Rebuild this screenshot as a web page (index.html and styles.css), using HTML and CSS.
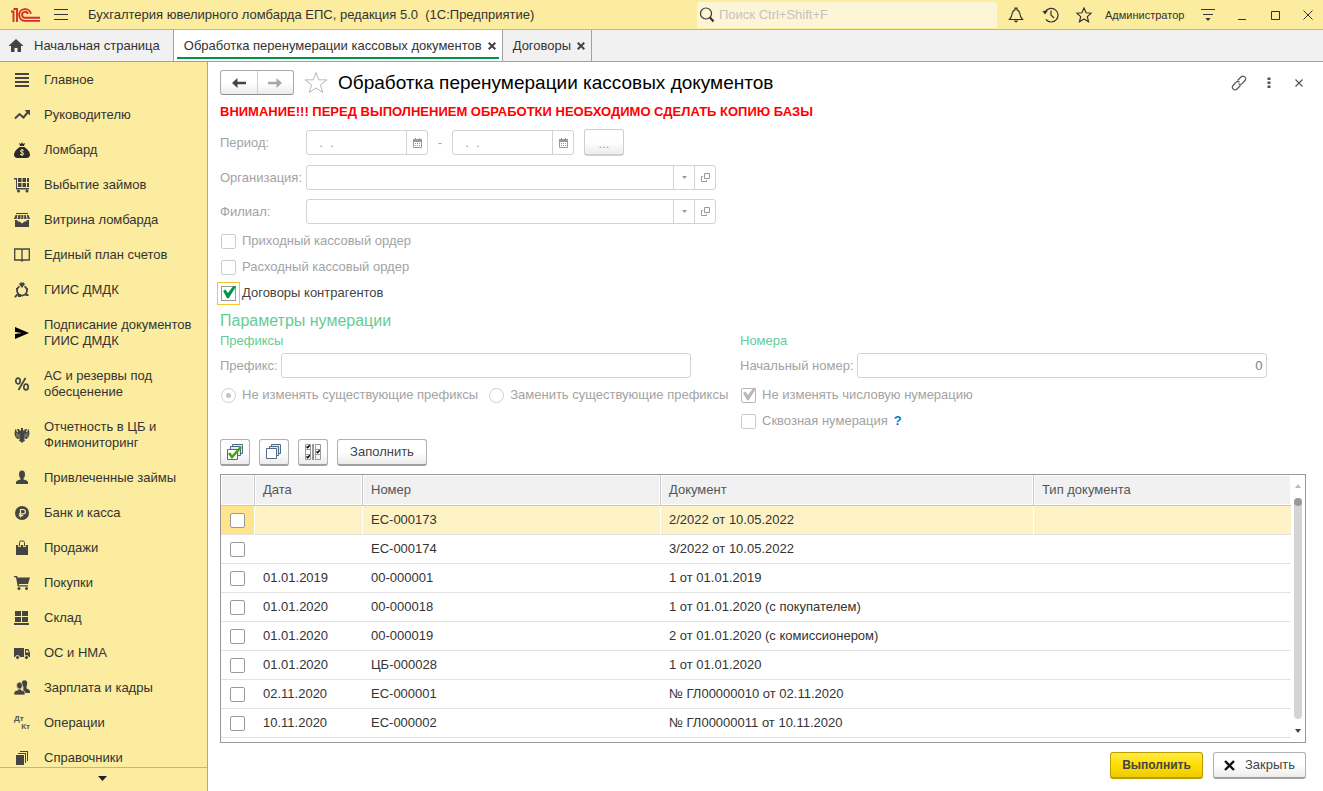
FILE: index.html
```html
<!DOCTYPE html>
<html lang="ru">
<head>
<meta charset="utf-8">
<title>Обработка перенумерации кассовых документов</title>
<link rel="stylesheet" href="styles.css">
</head>
<body>
<header class="topbar">
  <svg class="logo" width="30" height="16" viewBox="0 0 30 16" fill="none" stroke="#dc2a2a" stroke-width="1.900"><path d="M0 4.500h2.500V15M2.500 2h3.500V15"/><path d="M19.900 6.800A5.900 5.900 0 1 0 14 13.900H29"/><path d="M17 7A3 3 0 1 0 14 10.800H29"/></svg>
  <button class="icon-btn burger" aria-label="Меню"><svg width="14" height="12" viewBox="0 0 14 12" stroke="#333" fill="none"><path d="M0 .5h14M0 5.500h14M0 10.500h14"/></svg></button>
  <span class="app-title">Бухгалтерия ювелирного ломбарда ЕПС, редакция 5.0&nbsp; (1С:Предприятие)</span>
  <label class="search">
    <svg width="16" height="16" viewBox="0 0 16 16" fill="none" stroke="#333"><circle cx="7" cy="6.500" r="5.500" stroke-width="1.200"/><path d="M11 10.500l3.500 4" stroke-width="2.200"/></svg>
    <input type="search" placeholder="Поиск Ctrl+Shift+F" aria-label="Поиск">
  </label>
  <button class="icon-btn" aria-label="Уведомления"><svg width="16" height="16" viewBox="0 0 16 16" fill="none" stroke="#333" stroke-width="1.200"><path d="M1.500 12.500c2-2 2.500-4 3-7C4.900 3.500 6.500 3 7 2.800V1.200h2v1.600c.5.200 2.100.7 2.500 2.700.5 3 1 5 3 7z"/><path d="M5.500 13.500h5L8 15.800z" fill="#333" stroke="none"/></svg></button>
  <button class="icon-btn" aria-label="История"><svg width="17" height="16" viewBox="0 0 17 16" fill="none" stroke="#333" stroke-width="1.200"><path d="M3 5.500A6.800 6.800 0 1 1 4 12.500"/><path d="M9 3.500V8l3 3"/><path d="M.5 4l5.500-.5L3 7.500z" fill="#333" stroke="none"/></svg></button>
  <button class="icon-btn" aria-label="Избранное"><svg width="16" height="16" viewBox="0 0 16 16" fill="none" stroke="#333" stroke-width="1.200"><path d="M8 1l2.100 4.800 5.100.4-3.900 3.400 1.200 5.100L8 12l-4.500 2.700 1.200-5.100L.8 6.200l5.100-.4z"/></svg></button>
  <span class="user">Администратор</span>
  <button class="icon-btn" aria-label="Сервис"><svg width="14" height="14" viewBox="0 0 14 14" stroke="#333" fill="none"><path d="M0 1.500h14M2 6.500h10"/><path d="M4.500 10h5L7 13z" fill="#333" stroke="none"/></svg></button>
  <button class="icon-btn" aria-label="Свернуть"><svg width="10" height="12" viewBox="0 0 10 12" stroke="#333"><path d="M1 10.500h8"/></svg></button>
  <button class="icon-btn" aria-label="Развернуть"><svg width="10" height="10" viewBox="0 0 10 10" fill="none" stroke="#333"><path d="M.5 1.500h8v8h-8z"/></svg></button>
  <button class="icon-btn" aria-label="Закрыть программу"><svg width="10" height="10" viewBox="0 0 10 10" stroke="#333"><path d="M.5.500l9 9M9.500.500l-9 9"/></svg></button>
</header>

<nav class="tabs">
  <a class="tab home" href="#"><svg width="16" height="14" viewBox="0 0 16 14" fill="#444"><path d="M8 0l7.500 7H13v6H9.500V9h-3v4H3V7H.5z"/></svg>Начальная страница</a>
  <div class="tab active"><a href="#">Обработка перенумерации кассовых документов</a><button class="tab-close" aria-label="Закрыть вкладку"><svg width="8" height="8" viewBox="0 0 8 8" stroke="#444" stroke-width="2"><path d="M.7.7l6.600 6.600M7.300.7L.7 7.300"/></svg></button></div>
  <div class="tab"><a href="#">Договоры</a><button class="tab-close" aria-label="Закрыть вкладку"><svg width="8" height="8" viewBox="0 0 8 8" stroke="#444" stroke-width="2"><path d="M.7.7l6.600 6.600M7.300.7L.7 7.300"/></svg></button></div>
</nav>

<div class="body">
<aside class="sidebar">
  <div class="menu">
    <a href="#"><svg viewBox="0 0 16 16"><path d="M1 1h14v2H1zM1 5h14v2H1zM1 9h14v2H1zM1 13h14v2H1z"/></svg>Главное</a>
    <a href="#"><svg viewBox="0 0 16 16"><path d="M1 11.500l4.500-4.500 4 3.500L14 5" fill="none" stroke="#444" stroke-width="2"/><path d="M10.500 3H16v5.500z"/></svg>Руководителю</a>
    <a href="#"><svg viewBox="0 0 16 16"><g fill="#2b2b2b"><path d="M5 1l2 1 1-2 1 2 2-1-1 3H6z"/><path d="M5.500 5h5c2 1.500 5.500 4.500 5.500 8 0 2-2 3-3 3H3c-1 0-3-1-3-3 0-3.500 3.500-6.500 5.500-8z"/></g><path d="M9.800 8.500C8.500 7.500 6.200 7.800 6.500 9.300c.3 1.400 3.200.8 3.200 2.400 0 1.500-2.500 1.600-3.600.6M8 7v7" fill="none" stroke="#fbec9f"/></svg>Ломбард</a>
    <a href="#"><svg viewBox="0 0 16 16"><path d="M0 1h3v10h12v1.500H2V2.500H0zM4 1h3.500v4H4zM8.500 1H12v4H8.500zM13 1h2v4h-2zM4 6h3.500v4H4zM8.500 6H12v4H8.500zM13 6h2v4h-2z"/><circle cx="4.500" cy="14" r="1.500"/><circle cx="13" cy="14" r="1.500"/></svg>Выбытие займов</a>
    <a href="#"><svg viewBox="0 0 16 16"><path d="M2 1h12v1H2zM1.500 3h2L2.500 7H0zM4.500 3h2.200l-.4 4H3.500zM7.500 3h1.800v4H7.200zM10.200 3h1.500l1 4h-2.500zM12.700 3h1.800L16 7h-2.300zM1 8h2l1 1.500h1.500L8 11.500l2.500-2H12L13 8h2v7H1z"/></svg>Витрина ломбарда</a>
    <a href="#"><svg viewBox="0 0 16 16"><path d="M.7 2h6.500L8 3l.8-1h6.500v11H9l-1 1-1-1H.7zM8 3v11" fill="none" stroke="#444" stroke-width="1.300"/></svg>Единый план счетов</a>
    <a href="#"><svg viewBox="0 0 16 16"><path d="M5.500 4.200a5 5 0 1 0 5 0M4 12L.8 15.200" fill="none" stroke="#444" stroke-width="1.800"/><path d="M5 2l1.500-1.500h3L11 2 8 6z"/><path d="M2 6h2v2H2zM12 6h2v2h-2zM11.500 12h3v2h-3zM4 12h3v3H4z"/></svg>ГИИС ДМДК</a>
    <a href="#"><svg viewBox="0 0 16 16"><path d="M1 2l14 6-14 6V9l7-1-7-1z" fill="#000"/></svg>Подписание документов ГИИС ДМДК</a>
    <a href="#"><svg viewBox="0 0 16 16"><g stroke="#444" fill="none" stroke-width="1.700"><ellipse cx="4" cy="5" rx="2.200" ry="2.800"/><ellipse cx="12" cy="11" rx="2.200" ry="2.800"/><path d="M11.500 2l-7 12"/></g></svg>АС и резервы под обесценение</a>
    <a href="#"><svg viewBox="0 0 16 16"><path d="M7 1h2v2l1 1 1-2h2l-1 2.500 1 1L14 2l1 1 .5 4-1 3-2 2-2.500-.5 1 2.500-1.500.5L8 16l-1.500-1.500L5 14l1-2.500-2.500.5-2-2-1-3L1 3l1-1 1 3.500 1-1L3 2h2l1 2 1-1z"/><path d="M3 6v4M5 7v4M11 7v4M13 6v4" stroke="#fbec9f" stroke-width=".5"/></svg>Отчетность в ЦБ и Финмониторинг</a>
    <a href="#"><svg viewBox="0 0 16 16"><ellipse cx="8" cy="4.500" rx="3" ry="4"/><path d="M6.500 8h3v1.500c3 .5 4.500 1.500 4.500 3V14H2v-1.500c0-1.500 1.500-2.500 4.500-3z"/></svg>Привлеченные займы</a>
    <a href="#"><svg viewBox="0 0 16 16"><circle cx="8" cy="8" r="7"/><path d="M6.500 12.500V4.500h2.700a2.200 2.200 0 0 1 0 4.400H4.800M4.800 10.700h4.400" fill="none" stroke="#fbec9f" stroke-width="1.200"/></svg>Банк и касса</a>
    <a href="#"><svg viewBox="0 0 16 16"><path d="M2 5h12v10H2z"/><path d="M5.500 7V2.500q0-1.500 1.500-1.500h2q1.500 0 1.500 1.500V7" fill="none" stroke="#fbec9f" stroke-width="2.600"/><path d="M5.500 6V2.500q0-1.500 1.500-1.500h2q1.500 0 1.500 1.500V6" fill="none" stroke="#444"/></svg>Продажи</a>
    <a href="#"><svg viewBox="0 0 16 16"><path d="M0 1h3l.6 1.500H16L14 9H4.800l.2 1.200h9v1.300H3.700L2 2.300H0z"/><circle cx="5" cy="13.500" r="1.500"/><circle cx="12.500" cy="13.500" r="1.500"/></svg>Покупки</a>
    <a href="#"><svg viewBox="0 0 16 16"><path d="M1 1h6v5H1zM8 1h6v5H8zM1 7h6v5H1zM8 7h6v5H8zM0 13h15v2H0z"/></svg>Склад</a>
    <a href="#"><svg viewBox="0 0 16 16"><path d="M0 3h10v9H0zM11 4h3.500L16 8v4h-5z"/><path d="M12 5.500h2l.8 2H12z" fill="#fbec9f"/><g stroke="#fbec9f"><circle cx="3.500" cy="12.500" r="2"/><circle cx="12.500" cy="12.500" r="2"/></g></svg>ОС и НМА</a>
    <a href="#"><svg viewBox="0 0 16 16"><ellipse cx="10.500" cy="3.500" rx="2.700" ry="3.300"/><path d="M9.500 6h3v2.500c2 .5 3.500 1.500 3.500 3V13H9z"/><g stroke="#fbec9f" stroke-width=".7"><path d="M4 8.500h3V10c3 .5 4 1.500 4 3v2H0v-2c0-1.500 1-2.500 4-3z"/><ellipse cx="5.500" cy="5.500" rx="2.900" ry="3.500"/></g></svg>Зарплата и кадры</a>
    <a href="#"><span class="dtkt" aria-hidden="true"><b>Дт</b><b>Кт</b></span>Операции</a>
    <a href="#"><svg viewBox="0 0 16 16"><path d="M2 5h8v10H2zM4 3h8v10h-1V4H4zM6 1h8v10h-1V2H6z"/></svg>Справочники</a>
  </div>
  <button class="more" aria-label="Ещё"><svg width="9" height="5" viewBox="0 0 9 5"><path d="M0 0h9L4.500 5z" fill="#222"/></svg></button>
</aside>

<main class="page">
  <div class="page-head">
    <div class="history">
      <button aria-label="Назад"><svg width="14" height="10" viewBox="0 0 14 10" fill="#444"><path d="M0 5l5.500-5v3.700H14v2.600H5.500V10z"/></svg></button>
      <button aria-label="Вперед"><svg width="14" height="10" viewBox="0 0 14 10" fill="#a8a8a8"><path d="M14 5L8.500 0v3.700H0v2.600h8.500V10z"/></svg></button>
    </div>
    <button class="icon-btn fav" aria-label="В избранное"><svg width="24" height="23" viewBox="0 0 24 23" fill="none" stroke="#b4b9c0"><path d="M12 1.500l2.700 7.300 8.300.1-6.600 4.900 2.500 7.700L12 17l-6.900 4.500 2.500-7.700L1 8.900l8.300-.1z"/></svg></button>
    <h1>Обработка перенумерации кассовых документов</h1>
    <button class="icon-btn tool" aria-label="Получить ссылку"><svg width="16" height="16" viewBox="0 0 16 16" fill="none" stroke="#555" stroke-width="1.200"><path d="M6.500 5.500L10 2c2.500-2.500 6 1 4 3.500L11 8.700c-1 1-2.500 1-3.500 0M9.500 10.500L6 14c-2.500 2.500-6-1-4-3.500L5 7.300c1-1 2.500-1 3.500 0"/></svg></button>
    <button class="icon-btn tool" aria-label="Ещё действия"><svg width="4" height="12" viewBox="0 0 4 12" fill="#555"><path d="M.5.500h3v2.500h-3zM.5 4.500h3V7h-3zM.5 8.500h3V11h-3z"/></svg></button>
    <button class="icon-btn tool" aria-label="Закрыть форму"><svg width="8" height="8" viewBox="0 0 8 8" stroke="#555" stroke-width="1.200"><path d="M.5.500l7 7M7.500.500l-7 7"/></svg></button>
  </div>

  <p class="warning">ВНИМАНИЕ!!! ПЕРЕД ВЫПОЛНЕНИЕМ ОБРАБОТКИ НЕОБХОДИМО СДЕЛАТЬ КОПИЮ БАЗЫ</p>

  <div class="row period">
    <label class="lbl" for="from">Период:</label>
    <div class="field date"><input id="from" value="  .  .    " disabled><button disabled aria-label="Выбрать дату"><svg width="9" height="10" viewBox="0 0 9 10"><path d="M.5 1.500h8v8h-8z" fill="none" stroke="#999"/><path d="M0 1h9v3H0zM2 0h1v1H2zM6 0h1v1H6zM2 5h1v1H2zM4 5h1v1H4zM6 5h1v1H6zM2 7h1v1H2zM4 7h1v1H4zM6 7h1v1H6z" fill="#999"/></svg></button></div>
    <span class="dash">-</span>
    <div class="field date"><input aria-label="Конец периода" value="  .  .    " disabled><button disabled aria-label="Выбрать дату"><svg width="9" height="10" viewBox="0 0 9 10"><path d="M.5 1.500h8v8h-8z" fill="none" stroke="#999"/><path d="M0 1h9v3H0zM2 0h1v1H2zM6 0h1v1H6zM2 5h1v1H2zM4 5h1v1H4zM6 5h1v1H6zM2 7h1v1H2zM4 7h1v1H4zM6 7h1v1H6z" fill="#999"/></svg></button></div>
    <button class="btn dots" disabled>...</button>
  </div>
  <div class="row">
    <label class="lbl" for="org">Организация:</label>
    <div class="field wide"><input id="org" disabled><button disabled aria-label="Список"><svg width="5" height="3" viewBox="0 0 5 3"><path d="M0 0h5L2.500 3z" fill="#999"/></svg></button><button disabled aria-label="Открыть"><svg width="9" height="9" viewBox="0 0 9 9" fill="none" stroke="#999"><path d="M3.500.500h5v5h-5zM2 3.500H.5v5h5V7"/></svg></button></div>
  </div>
  <div class="row">
    <label class="lbl" for="branch">Филиал:</label>
    <div class="field wide"><input id="branch" disabled><button disabled aria-label="Список"><svg width="5" height="3" viewBox="0 0 5 3"><path d="M0 0h5L2.500 3z" fill="#999"/></svg></button><button disabled aria-label="Открыть"><svg width="9" height="9" viewBox="0 0 9 9" fill="none" stroke="#999"><path d="M3.500.500h5v5h-5zM2 3.500H.5v5h5V7"/></svg></button></div>
  </div>

  <div class="checks">
    <label class="opt off"><input type="checkbox" disabled>Приходный кассовый ордер</label>
    <label class="opt off"><input type="checkbox" disabled>Расходный кассовый ордер</label>
    <label class="opt"><input class="focused" type="checkbox" checked>Договоры контрагентов</label>
  </div>

  <h2>Параметры нумерации</h2>
  <div class="params">
    <section>
      <h3>Префиксы</h3>
      <div class="row tight"><label for="prefix">Префикс:</label><div class="field wide"><input id="prefix" disabled></div></div>
      <div class="radios">
        <label class="opt off"><input type="radio" name="mode" checked disabled>Не изменять существующие префиксы</label>
        <label class="opt off"><input type="radio" name="mode" disabled>Заменить существующие префиксы</label>
      </div>
    </section>
    <section>
      <h3>Номера</h3>
      <div class="row tight"><label for="start">Начальный номер:</label><div class="field wide"><input class="num" id="start" value="0" disabled></div></div>
      <label class="opt off"><input type="checkbox" checked disabled>Не изменять числовую нумерацию</label>
      <div class="with-help"><label class="opt off"><input type="checkbox" disabled>Сквозная нумерация</label><a class="help" href="#">?</a></div>
    </section>
  </div>

  <div class="toolbar">
    <button class="btn sq" aria-label="Установить флажки"><svg width="16" height="16" viewBox="0 0 16 16" stroke="#4e6a86"><path d="M5.500.500h10v9h-10z" fill="#dfeaf2"/><path d="M3.500 2.500h10v9h-10z" fill="#dfeaf2"/><path d="M.5 5.500h10v10H.5z" fill="#fff"/><path d="M2 9l3 4L14 3" fill="none" stroke="#3aa614" stroke-width="2.600"/></svg></button>
    <button class="btn sq" aria-label="Снять флажки"><svg width="16" height="16" viewBox="0 0 16 16" stroke="#4e6a86"><path d="M5.500.500h9v9h-9z" fill="#dfeaf2"/><path d="M3.500 2.500h9v9h-9z" fill="#dfeaf2"/><path d="M.5 4.500h10v10H.5z" fill="#fff"/></svg></button>
    <button class="btn sq" aria-label="Инвертировать флажки"><svg width="16" height="16" viewBox="0 0 16 16" fill="none" stroke="#999"><path d="M.5.500h5v15h-5zM.5 5.500h5M.5 10.500h5M10.500.500h5v15h-5zM10.500 5.500h5M10.500 10.500h5"/><path d="M8 0v16" stroke="#333"/><path d="M1.500 2.500l1.200 1.200 2-2.500M1.500 12.500l1.200 1.200 2-2.500M11.500 7.500l1.200 1.200 2-2.500" stroke="#000" stroke-width="1.400"/></svg></button>
    <button class="btn fill">Заполнить</button>
  </div>

  <div class="grid">
    <table>
      <colgroup><col class="c-check"><col class="c-date"><col class="c-num"><col class="c-doc"><col></colgroup>
      <thead><tr><th></th><th>Дата</th><th>Номер</th><th>Документ</th><th>Тип документа</th></tr></thead>
      <tbody>
        <tr class="sel"><td><input type="checkbox" aria-label="Строка 1"></td><td></td><td>ЕС-000173</td><td>2/2022 от 10.05.2022</td><td></td></tr>
        <tr><td><input type="checkbox" aria-label="Строка 2"></td><td></td><td>ЕС-000174</td><td>3/2022 от 10.05.2022</td><td></td></tr>
        <tr><td><input type="checkbox" aria-label="Строка 3"></td><td>01.01.2019</td><td>00-000001</td><td>1 от 01.01.2019</td><td></td></tr>
        <tr><td><input type="checkbox" aria-label="Строка 4"></td><td>01.01.2020</td><td>00-000018</td><td>1 от 01.01.2020 (с покупателем)</td><td></td></tr>
        <tr><td><input type="checkbox" aria-label="Строка 5"></td><td>01.01.2020</td><td>00-000019</td><td>2 от 01.01.2020 (с комиссионером)</td><td></td></tr>
        <tr><td><input type="checkbox" aria-label="Строка 6"></td><td>01.01.2020</td><td>ЦБ-000028</td><td>1 от 01.01.2020</td><td></td></tr>
        <tr><td><input type="checkbox" aria-label="Строка 7"></td><td>02.11.2020</td><td>ЕС-000001</td><td>№ ГЛ00000010 от 02.11.2020</td><td></td></tr>
        <tr><td><input type="checkbox" aria-label="Строка 8"></td><td>10.11.2020</td><td>ЕС-000002</td><td>№ ГЛ00000011 от 10.11.2020</td><td></td></tr>
      </tbody>
    </table>
    <div class="scroll" aria-hidden="true">
      <svg width="6" height="4" viewBox="0 0 6 4"><path d="M0 4h6L3 0z" fill="#bbb"/></svg>
      <div class="track"><div class="thumb"></div></div>
      <svg width="6" height="4" viewBox="0 0 6 4"><path d="M0 0h6L3 4z" fill="#444"/></svg>
    </div>
  </div>

  <footer class="actions">
    <button class="btn primary">Выполнить</button>
    <button class="btn close"><svg width="11" height="11" viewBox="0 0 11 11" stroke="#111" stroke-width="2.400"><path d="M1 1l9 9M10 1l-9 9"/></svg>Закрыть</button>
  </footer>
</main>
</div>
</body>
</html>
```
FILE: styles.css
```css
* { box-sizing: border-box; }
body {
  margin: 0;
  min-height: 100vh;
  display: flex;
  flex-direction: column;
  font: 13px/16px "Liberation Sans", Arial, sans-serif;
  color: #333;
  background: #fff;
}
button, input { font: inherit; color: inherit; }
a { color: inherit; text-decoration: none; }
h1, h2, h3, p { margin: 0; font-weight: normal; }
svg { flex: none; }

.icon-btn {
  flex: none;
  width: 34px;
  height: 28px;
  padding: 0;
  border: 0;
  background: none;
  display: flex;
  align-items: center;
  justify-content: center;
}

/* Top bar */
.topbar {
  height: 30px;
  display: flex;
  align-items: center;
  padding-left: 11px;
  background: #fbec9f;
  border-bottom: 1px solid #c3b779;
}
.burger { width: 40px; }
.app-title { flex: 1; padding-left: 7px; white-space: nowrap; }
.search {
  width: 300px;
  height: 26px;
  margin-right: 2px;
  padding-left: 2px;
  display: flex;
  align-items: center;
  gap: 4px;
  background: #fdf6d6;
  border-radius: 2px;
}
.search input { flex: 1; min-width: 0; padding: 0; border: 0; outline: 0; background: none; }
.search input::placeholder { color: #c5c1c0; opacity: 1; }
.user { min-width: 90px; padding-left: 4px; font-size: 11px; }
.topbar .icon-btn:last-child { width: 30px; }

/* Tabs */
.tabs {
  height: 32px;
  display: flex;
  background: #f1f1f1;
  border-bottom: 1px solid #a0a0a0;
}
.tab {
  display: flex;
  align-items: center;
  gap: 6px;
  padding: 0 6px 0 10px;
  border-right: 1px solid #a0a0a0;
  white-space: nowrap;
}
.home { gap: 10px; padding: 0 13px 0 8px; }
.active { position: relative; background: #fff; }
.active::after {
  content: "";
  position: absolute;
  left: 3px;
  right: 3px;
  bottom: 2px;
  height: 2px;
  background: #009646;
}
.tab-close { display: flex; padding: 0; border: 0; background: none; }

/* Sidebar */
.body { flex: 1; display: flex; min-height: 0; }
.sidebar {
  flex: none;
  width: 208px;
  display: flex;
  flex-direction: column;
  background: #fbec9f;
  border-right: 1px solid #b5a96b;
}
.menu { flex: 1 1 0; min-height: 0; overflow: hidden; padding-top: 1px; }
.menu a {
  display: flex;
  align-items: center;
  gap: 14px;
  padding: 9px 14px 10px;
}
.menu svg { width: 16px; height: 16px; fill: #444; }
.dtkt {
  flex: none;
  width: 16px;
  height: 16px;
  display: flex;
  flex-direction: column;
  font-size: 8px;
  line-height: 8px;
  color: #555;
}
.dtkt b:last-child { align-self: flex-end; }
.more {
  height: 24px;
  padding: 0 2px 2px 0;
  border: 0;
  border-top: 1px solid #c3b779;
  background: none;
  display: flex;
  align-items: center;
  justify-content: center;
}

/* Page */
.page {
  flex: 1;
  min-width: 0;
  display: flex;
  flex-direction: column;
  padding: 8px 17px 12px 12px;
}
.page-head { display: flex; align-items: center; height: 25px; }
.history {
  display: flex;
  width: 74px;
  height: 25px;
  border: 1px solid #a9a9a9;
  border-bottom-color: #8e8e8e;
  border-radius: 3px;
  background: linear-gradient(#fff 50%, #ececec);
}
.history button {
  flex: 1;
  display: flex;
  align-items: center;
  justify-content: center;
  padding: 0;
  border: 0;
  background: none;
}
.history button + button { border-left: 1px solid #cfcfcf; }
.fav { width: 44px; }
h1 { flex: 1; font-size: 19px; line-height: 24px; color: #000; }
.tool { width: 30px; }
.page-head .tool:last-child { margin-right: -8px; }
.warning { margin-top: 9px; font-weight: bold; color: #f00; }

.row { display: flex; align-items: center; margin-top: 9px; color: #a3a3a3; }
.lbl { width: 86px; }
.tight { margin-top: 4px; gap: 3px; }
.field {
  display: flex;
  height: 25px;
  border: 1px solid #d2d2d2;
  border-radius: 3px;
  background: #fff;
}
.wide { width: 410px; }
.date { width: 122px; }
.field input {
  flex: 1;
  min-width: 0;
  padding: 0 5px;
  border: 0;
  background: none;
  color: #808080;
}
.date input { color: #6fa0c8; }
.field .num { padding-right: 3px; text-align: right; }
.field button {
  width: 21px;
  padding: 0;
  border: 0;
  border-left: 1px solid #d2d2d2;
  background: none;
  display: flex;
  align-items: center;
  justify-content: center;
}
.dash { width: 24px; text-align: center; }

.btn {
  height: 27px;
  padding: 0;
  border: 1px solid #b0b0b0;
  border-bottom: 2px solid #a0a0a0;
  border-radius: 3px;
  background: linear-gradient(#fff 50%, #ececec);
  color: #444;
  display: flex;
  align-items: center;
  justify-content: center;
}
.dots { width: 40px; margin-left: 10px; padding-top: 3px; border-color: #cfcfcf; color: #a3a3a3; }
.sq { width: 30px; }
.fill { width: 90px; }

/* Options */
.opt { display: flex; align-items: center; height: 26px; gap: 6px; padding-left: 1px; color: #444; }
.off { color: #a3a3a3; }
.checks { margin-top: 4px; display: flex; flex-direction: column; align-items: flex-start; }
input[type="checkbox"], input[type="radio"] {
  appearance: none;
  flex: none;
  width: 15px;
  height: 15px;
  margin: 0;
  border: 1px solid #999;
  border-radius: 2px;
  background: #fff;
  display: block;
}
input[type="radio"] { border-radius: 50%; padding: 4px; }
.off input[type="checkbox"], .off input[type="radio"] { border-color: #cdcdcd; }
input[type="radio"]:checked::before {
  content: "";
  display: block;
  width: 5px;
  height: 5px;
  border-radius: 50%;
  background: #c4c4c4;
}
input[type="checkbox"]:checked::before {
  content: "";
  display: block;
  width: 14px;
  height: 13px;
  margin-top: -1px;
  background: #009646;
  clip-path: polygon(8% 42%, 24% 30%, 42% 58%, 84% 0, 100% 8%, 48% 98%, 36% 98%);
}
.off input[type="checkbox"]:checked { border-color: #b8b8b8; }
.off input[type="checkbox"]:checked::before { background: #b8b8b8; }
input.focused { border-radius: 0; outline: 1px solid #f5c92d; outline-offset: 3px; }

h2 { margin-top: 5px; font-size: 16px; line-height: 20px; color: #66cc94; }
h3 { font-size: 13px; line-height: 16px; color: #66cc94; }
.params { display: grid; grid-template-columns: 520px 1fr; margin-top: 2px; }
.params .row + * { margin-top: 4px; }
.radios { display: flex; gap: 10px; white-space: nowrap; }
.with-help { display: flex; align-items: center; gap: 6px; }
.help { color: #0b79c1; font-weight: bold; }

.toolbar { display: flex; gap: 9px; margin-top: 5px; }

/* Table */
.grid {
  flex: 1;
  display: flex;
  margin-top: 8px;
  border: 1px solid #999;
}
table { flex: 1; align-self: flex-start; border-collapse: separate; border-spacing: 0; table-layout: fixed; width: 100%; }
.c-check { width: 34px; }
.c-date { width: 108px; }
.c-num { width: 298px; }
.c-doc { width: 373px; }
th, td { padding: 0 8px; text-align: left; font-weight: normal; white-space: nowrap; }
td:first-child { padding-left: 9px; }
th {
  height: 31px;
  color: #555;
  background: #f1f1f1;
  border-right: 1px solid #c8c8c8;
  border-bottom: 1px solid #c8c8c8;
  box-shadow: inset 0 0 0 1px #fff;
}
td { height: 29px; border-bottom: 1px solid #e2e2e2; }
th:last-child { border-right: 0; }
.sel td { background: #fdf2c5; border-right: 1px solid #fff; }
.sel td:first-child { background: #ffe48c; }
.sel td:last-child { border-right: 0; }
.scroll {
  flex: none;
  width: 14px;
  padding: 9px 0;
  display: flex;
  flex-direction: column;
  align-items: center;
}
.track { flex: 1; width: 8px; margin: 10px 0; border-radius: 4px; background: #d4d4d4; }
.thumb { height: 8px; border-radius: 4px; background: #999; }

.actions { display: flex; justify-content: flex-end; gap: 10px; margin-top: 9px; }
.primary {
  width: 93px;
  font-weight: bold;
  font-size: 12px;
  border-color: #b8a000;
  background: linear-gradient(#ffe94a, #ffdf00 50%, #eccb00);
}
.close { width: 93px; gap: 10px; }
```
